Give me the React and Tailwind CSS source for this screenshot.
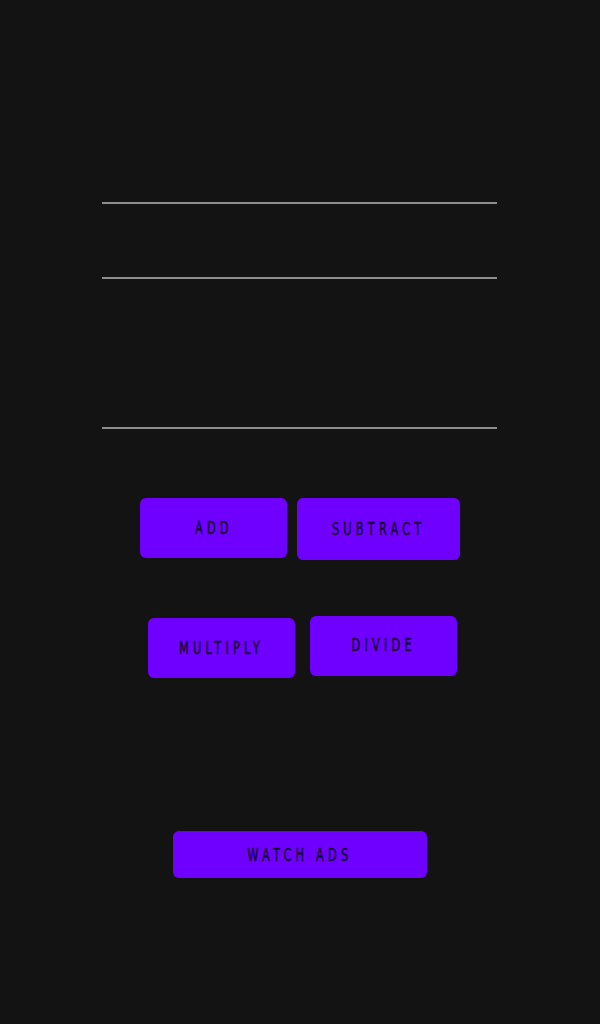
import React from "react";

const btn =
  "flex items-center justify-center rounded-[6px] bg-[#6f00ff] text-[#160632]";
const label =
  "inline-block scale-x-[0.7] whitespace-nowrap pl-[1px] text-[18px] leading-none tracking-[6px] [-webkit-text-stroke:0.5px_#160632] [font-family:'DejaVu_Sans_Condensed','DejaVu_Sans',sans-serif]";

function Btn({ children, className }) {
  return (
    <button className={`${btn} ${className}`}>
      <span className={label}>{children}</span>
    </button>
  );
}

export default function App() {
  return (
    <div className="min-h-screen w-full bg-[#131313] pt-[202px] pb-[145px]">
      <div className="ml-[102px] flex w-[395px] flex-col">
        <div className="h-[2px] bg-[#8e8e8e]" />
        <div className="mt-[73px] h-[2px] bg-[#8e8e8e]" />
        <div className="mt-[148px] h-[2px] bg-[#8e8e8e]" />
      </div>

      <div className="mt-[69px] ml-[140px] flex items-start gap-[10px]">
        <Btn className="h-[60px] w-[147px]">ADD</Btn>
        <Btn className="h-[62px] w-[163px]">SUBTRACT</Btn>
      </div>

      <div className="mt-[56px] ml-[148px] flex items-start gap-[15px]">
        <Btn className="mt-[2px] h-[60px] w-[147px]">MULTIPLY</Btn>
        <Btn className="h-[60px] w-[147px] pb-[2px]">DIVIDE</Btn>
      </div>

      <div className="mt-[153px] ml-[173px] flex">
        <Btn className="h-[47px] w-[254px]">WATCH ADS</Btn>
      </div>
    </div>
  );
}
